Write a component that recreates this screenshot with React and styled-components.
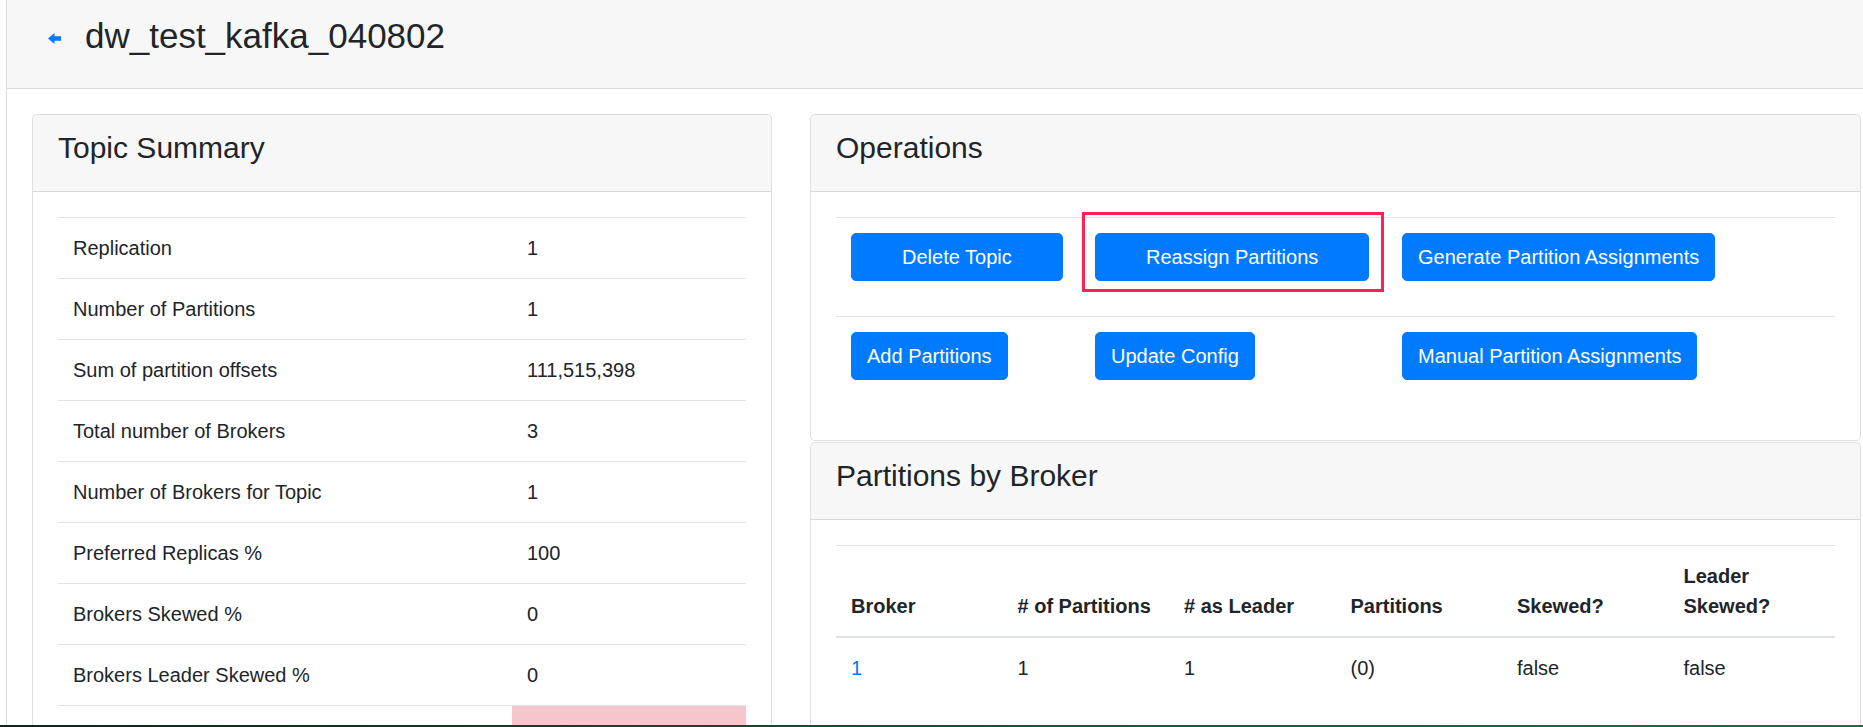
import styled, { createGlobalStyle } from "styled-components";

const GlobalStyle = createGlobalStyle`
  *, *::before, *::after {
    box-sizing: border-box;
  }

  body {
    margin: 0;
    background-color: #fff;
    color: #212529;
    font-family: "Liberation Sans", Arial, sans-serif;
    font-size: 20px;
    line-height: 1.5;
  }
`;

const summary = [
  ["Replication", "1"],
  ["Number of Partitions", "1"],
  ["Sum of partition offsets", "111,515,398"],
  ["Total number of Brokers", "3"],
  ["Number of Brokers for Topic", "1"],
  ["Preferred Replicas %", "100"],
  ["Brokers Skewed %", "0"],
  ["Brokers Leader Skewed %", "0"],
  ["Brokers Spread %", "33", true],
];

const operations = [
  [
    { label: "Delete Topic", wide: true },
    { label: "Reassign Partitions", wide: true, marked: true },
    { label: "Generate Partition Assignments" },
  ],
  [
    { label: "Add Partitions" },
    { label: "Update Config" },
    { label: "Manual Partition Assignments" },
  ],
];

const brokerColumns = [
  "Broker",
  "# of Partitions",
  "# as Leader",
  "Partitions",
  "Skewed?",
  "Leader Skewed?",
];

const brokers = [["1", "1", "1", "(0)", "false", "false"]];

const Page = styled.div`
  margin-left: 6px;
  min-height: 100vh;
  border-left: 1px solid #dcdcdc;
`;

const TopBar = styled.header`
  padding: 15px 41px 31px;
  background-color: #f7f7f7;
  border-bottom: 1px solid #dcdcdc;
`;

const PageTitle = styled.h3`
  display: flex;
  align-items: center;
  gap: 24px;
  margin: 0;
  font-size: 35px;
  font-weight: 400;
  line-height: 42px;
`;

const BackLink = styled.a`
  display: flex;
  margin-top: 4px;
  color: #007bff;
`;

const Content = styled.main`
  display: grid;
  grid-template-columns: 740px 1051px;
  column-gap: 38px;
  align-items: start;
  padding: 25px 0 0 25px;
`;

const Column = styled.div`
  display: flex;
  flex-direction: column;
  gap: 1px;
`;

const Card = styled.section`
  background-color: #fff;
  border: 1px solid rgba(0, 0, 0, 0.125);
  border-radius: 5px;
  overflow: hidden;
`;

const CardHeader = styled.div`
  padding: 15px 25px;
  background-color: rgba(0, 0, 0, 0.03);
  border-bottom: 1px solid rgba(0, 0, 0, 0.125);
`;

const CardTitle = styled.h4`
  margin: 0 0 10px;
  font-size: 30px;
  font-weight: 400;
  line-height: 1.2;
`;

const CardBody = styled.div`
  padding: 25px 25px ${(p) => p.$bottom || "25px"};
`;

const Table = styled.table`
  width: 100%;
  table-layout: fixed;
  border-collapse: collapse;
`;

const Col = styled.col`
  width: ${(p) => p.$width || "auto"};
`;

const Cell = styled.td`
  padding: 15px;
  vertical-align: top;
  border-top: 1px solid #dee2e6;
  background-color: ${(p) => (p.$danger ? "#f5c6cb" : "transparent")};
`;

const HeadCell = styled.th`
  padding: 15px;
  text-align: left;
  vertical-align: bottom;
  font-weight: 700;
  border-top: 1px solid #dee2e6;
  border-bottom: 2px solid #dee2e6;
`;

const OpsRow = styled.div`
  display: grid;
  grid-template-columns: 244px 307px 1fr;
  border-top: 1px solid #dee2e6;
`;

const OpsCell = styled.div`
  padding: 15px 15px 35px;
`;

const Marked = styled.span`
  position: relative;
  display: inline-block;

  &::after {
    content: "";
    position: absolute;
    top: -21px;
    left: -13px;
    right: -15px;
    bottom: -11px;
    border: 3px solid #ff2152;
    pointer-events: none;
  }
`;

const Button = styled.button`
  display: inline-block;
  padding: 8px ${(p) => (p.$wide ? "50px" : "15px")};
  color: #fff;
  background-color: #007bff;
  border: 1px solid #007bff;
  border-radius: 5px;
  font-family: inherit;
  font-size: 20px;
  line-height: 30px;
  cursor: pointer;
`;

const BrokerLink = styled.a`
  color: #007bff;
  text-decoration: none;
`;

const Taskbar = styled.div`
  position: fixed;
  left: 0;
  right: 0;
  bottom: 0;
  height: 2px;
  background: linear-gradient(90deg, #10241b, #16573b 60%, #1b6d49);
`;

function BackArrow() {
  return (
    <svg width="13" height="11" viewBox="0 0 13 11">
      <path d="M0 5.5 L6.5 0 V3.2 H13 V7.8 H6.5 V11 Z" fill="currentColor" />
    </svg>
  );
}

function App() {
  return (
    <>
      <GlobalStyle />
      <Page>
        <TopBar>
          <PageTitle>
            <BackLink href="#">
              <BackArrow />
            </BackLink>
            dw_test_kafka_040802
          </PageTitle>
        </TopBar>
        <Content>
          <Card>
            <CardHeader>
              <CardTitle>Topic Summary</CardTitle>
            </CardHeader>
            <CardBody>
              <Table>
                <colgroup>
                  <Col $width="454px" />
                  <Col />
                </colgroup>
                <tbody>
                  {summary.map(([label, value, danger]) => (
                    <tr key={label}>
                      <Cell>{label}</Cell>
                      <Cell $danger={danger}>{value}</Cell>
                    </tr>
                  ))}
                </tbody>
              </Table>
            </CardBody>
          </Card>
          <Column>
            <Card>
              <CardHeader>
                <CardTitle>Operations</CardTitle>
              </CardHeader>
              <CardBody>
                {operations.map((row, i) => (
                  <OpsRow key={i}>
                    {row.map((op) => (
                      <OpsCell key={op.label}>
                        {op.marked ? (
                          <Marked>
                            <Button $wide={op.wide}>{op.label}</Button>
                          </Marked>
                        ) : (
                          <Button $wide={op.wide}>{op.label}</Button>
                        )}
                      </OpsCell>
                    ))}
                  </OpsRow>
                ))}
              </CardBody>
            </Card>
            <Card>
              <CardHeader>
                <CardTitle>Partitions by Broker</CardTitle>
              </CardHeader>
              <CardBody $bottom="45px">
                <Table>
                  <thead>
                    <tr>
                      {brokerColumns.map((c) => (
                        <HeadCell key={c}>{c}</HeadCell>
                      ))}
                    </tr>
                  </thead>
                  <tbody>
                    {brokers.map((row) => (
                      <tr key={row[0]}>
                        {row.map((v, j) =>
                          j === 0 ? (
                            <Cell key={j}>
                              <BrokerLink href="#">{v}</BrokerLink>
                            </Cell>
                          ) : (
                            <Cell key={j}>{v}</Cell>
                          )
                        )}
                      </tr>
                    ))}
                  </tbody>
                </Table>
              </CardBody>
            </Card>
          </Column>
        </Content>
      </Page>
      <Taskbar />
    </>
  );
}

export default App;
